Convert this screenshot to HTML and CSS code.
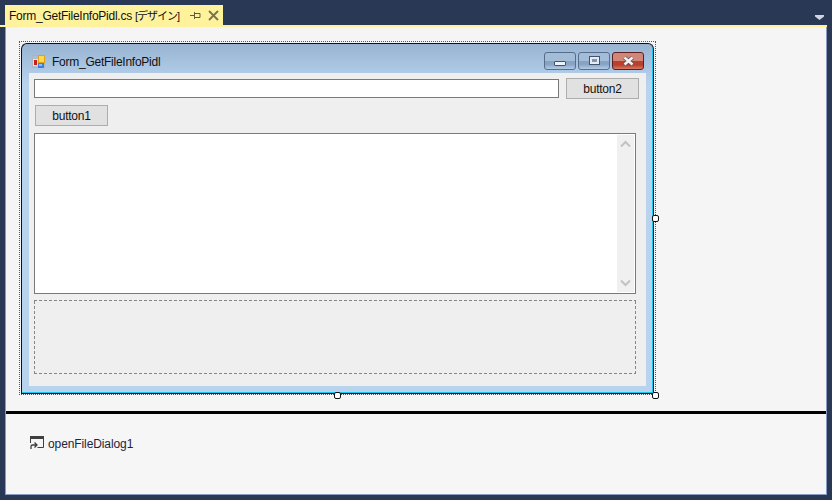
FILE: index.html
```html
<!DOCTYPE html>
<html lang="ja">
<head>
<meta charset="utf-8">
<title>Form_GetFileInfoPidl.cs [デザイン]</title>
<link rel="stylesheet" href="styles.css">
</head>
<body>
<div class="tabbar">
  <div class="tab">
    <span class="tab-title">Form_GetFileInfoPidl.cs <span class="tab-kind">[デザイン]</span></span>
    <svg class="pin" width="11" height="10" viewBox="0 0 11 10"><path d="M0 5.500h4M4.500 2v7M4.500 3.500h5.500v4h-5.500" fill="none" stroke="#5f5a38"/></svg>
    <svg class="tab-close" width="11" height="11" viewBox="0 0 11 11"><path d="M1 1l9 9M10 1l-9 9" fill="none" stroke="#77724f" stroke-width="1.800"/></svg>
  </div>
  <svg class="tab-menu" width="9" height="5" viewBox="0 0 9 5"><path d="M0 0h9v1.500l-4.500 3.500-4.500-3.500z" fill="#cfd6e2"/></svg>
</div>
<div class="tabline"></div>
<main class="surface">
  <section class="canvas">
    <div class="selection">
      <div class="window">
        <div class="titlebar">
          <svg class="app-icon" width="13" height="13" viewBox="0 0 13 13">
            <path d="M.5.500h12v12h-12z" fill="#b4bfca" fill-opacity=".55" stroke="#b0b0b0" stroke-opacity=".7"/>
            <rect x="1" y="4" width="5" height="7" fill="#e8e0d8"/>
            <rect x="2" y="5" width="3" height="5" fill="#c5201f"/>
            <rect x="6" y="0" width="7" height="8" fill="#e0a21c"/>
            <rect x="7" y="1" width="5" height="6" fill="#fbd94e"/>
            <rect x="6" y="8" width="6" height="5" fill="#3f7fdc"/>
            <rect x="7" y="9" width="3" height="2" fill="#8dbcf2"/>
          </svg>
          <span class="win-title">Form_GetFileInfoPidl</span>
          <div class="caption-btns">
            <div class="cap cap-min"><span class="glyph-min"></span></div>
            <div class="cap cap-max"><span class="glyph-max"></span></div>
            <div class="cap cap-close">
              <svg width="15" height="10" viewBox="0 0 15 10"><path d="M3.500 1.500l8 7M11.500 1.500l-8 7" fill="none" stroke="#5a4a4a" stroke-width="4"/><path d="M3.500 1.500l8 7M11.500 1.500l-8 7" fill="none" stroke="#f2f2f2" stroke-width="2.600"/></svg>
            </div>
          </div>
        </div>
        <div class="client">
          <div class="row-top">
            <div class="textbox"></div>
            <div class="btn">button2</div>
          </div>
          <div class="btn btn1">button1</div>
          <div class="listbox">
            <div class="scrollbar">
              <svg width="11" height="8" viewBox="0 0 11 8"><path d="M1 6.500l4.500-4.500 4.500 4.500" fill="none" stroke="#c2c2c2" stroke-width="2"/></svg>
              <svg width="11" height="8" viewBox="0 0 11 8"><path d="M1 1.500l4.500 4.500 4.500-4.500" fill="none" stroke="#c2c2c2" stroke-width="2"/></svg>
            </div>
          </div>
          <div class="panel"></div>
        </div>
      </div>
      <span class="handle h-e"></span>
      <span class="handle h-s"></span>
      <span class="handle h-se"></span>
    </div>
  </section>
  <div class="divider"></div>
  <section class="tray">
    <svg class="tray-icon" width="15" height="14" viewBox="0 0 15 14"><path d="M0 0h14v3h-14z" fill="#3f3f3f"/><path d="M.5 3v4M13.500 3v8.500h-6" fill="none" stroke="#3f3f3f"/><path d="M1 13v-2.500q0-1.500 1.500-1.500h4M4.500 6.500l2.500 2.500-2.500 2.500" fill="none" stroke="#3f3f3f" stroke-width="1.300"/></svg>
    <span class="tray-label">openFileDialog1</span>
  </section>
</main>
</body>
</html>
```
FILE: styles.css
```css
* { box-sizing: border-box; }
html, body { margin: 0; height: 100%; }
body {
  width: 832px;
  height: 500px;
  overflow: hidden;
  background: #293955;
  font-family: "Liberation Sans", "Noto Sans CJK JP", sans-serif;
  font-size: 12px;
  letter-spacing: -.25px;
  color: #111;
  display: flex;
  flex-direction: column;
}
.tabbar {
  height: 25px;
  padding: 5px 8px 0 5px;
  display: flex;
  justify-content: space-between;
  align-items: flex-start;
}
.tab {
  width: 218px;
  height: 20px;
  background: #fff29d;
  padding-left: 4px;
  display: flex;
  align-items: center;
}
.tab-title { width: 181px; flex: none; white-space: nowrap; }
.tab-kind { font-size: 11px; letter-spacing: -1px; }
.pin { margin-right: 7px; flex: none; }
.tab-close { flex: none; }
.tab-menu { margin-top: 10px; }
.tabline { height: 2px; margin-right: 5px; background: #fff29d; }
.surface {
  width: 822px;
  height: 468px;
  margin-left: 5px;
  background: #f5f5f5;
  border-left: 1px solid #8a9bc0;
  border-right: 1px solid #8a9bc0;
  border-bottom: 1px solid #8a9bc0;
  display: flex;
  flex-direction: column;
}
.canvas { height: 384px; padding: 14px 0 0 13px; }
.selection {
  position: relative;
  width: 637px;
  height: 354px;
  padding: 1px 1px 0;
  border: 1px dotted #555;
}
.window {
  width: 633px;
  height: 351px;
  border: 1px solid #111;
  border-right-color: #0a1a28;
  border-radius: 6px 6px 0 0;
  background: linear-gradient(#98b4d2, #b8d3ee 40px);
  box-shadow: inset -1px -1px 0 #19c8f0;
  padding: 0 7px 7px 7px;
  display: flex;
  flex-direction: column;
}
.titlebar {
  height: 29px;
  flex: none;
  display: flex;
  align-items: center;
  padding: 6px 2px 0 3px;
}
.app-icon { margin-right: 7px; flex: none; }
.win-title { flex: 1; }
.caption-btns { display: flex; gap: 2px; margin-top: -1px; }
.cap {
  width: 32px;
  height: 18px;
  border: 1px solid #566d8b;
  border-radius: 3px;
  background: linear-gradient(#a3bcd8 0 50%, #86a3c4 50% 70%, #b3cce6);
  display: flex;
  align-items: center;
  justify-content: center;
}
.cap-close {
  border-color: #5c2020;
  background: linear-gradient(#d2867a 0 50%, #b9402c 50% 75%, #d47c68);
}
.glyph-min {
  width: 12px;
  height: 5px;
  flex: none;
  margin-top: 5px;
  background: #eef1f5;
  border: 1px solid #44546c;
  border-radius: 1px;
}
.glyph-max {
  width: 11px;
  height: 9px;
  flex: none;
  margin-top: -2px;
  background: #7d96b8;
  border: 1px solid #44546c;
  box-shadow: inset 0 0 0 2px #e8ecf2;
}
.client {
  flex: 1;
  background: #efefef;
  padding: 5px 10px 12px 5px;
  display: flex;
  flex-direction: column;
}
.row-top { display: flex; gap: 7px; align-items: center; }
.textbox {
  width: 525px;
  height: 19px;
  flex: none;
  background: #fff;
  border: 1px solid #7a7a7a;
}
.btn {
  width: 73px;
  height: 21px;
  flex: none;
  background: #e1e1e1;
  border: 1px solid #adadad;
  display: flex;
  align-items: center;
  justify-content: center;
}
.btn1 { margin: 6px 0 7px 1px; }
.listbox {
  height: 161px;
  flex: none;
  background: #fff;
  border: 1px solid #7a7a7a;
  padding: 1px;
  display: flex;
  justify-content: flex-end;
}
.scrollbar {
  width: 17px;
  background: #f0f0f0;
  display: flex;
  flex-direction: column;
  justify-content: space-between;
  align-items: center;
  padding: 5px 0;
}
.panel {
  height: 74px;
  flex: none;
  margin-top: 6px;
  background:
    repeating-linear-gradient(90deg, #858585 0 3px, transparent 3px 5px) left top / 100% 1px no-repeat,
    repeating-linear-gradient(90deg, #858585 0 3px, transparent 3px 5px) left bottom / 100% 1px no-repeat,
    repeating-linear-gradient(0deg, #858585 0 3px, transparent 3px 5px) left top / 1px 100% no-repeat,
    repeating-linear-gradient(0deg, #858585 0 3px, transparent 3px 5px) right top / 1px 100% no-repeat;
}
.handle {
  position: absolute;
  width: 7px;
  height: 7px;
  background: #fff;
  border: 1px solid #111;
  border-radius: 2px;
}
.h-e { right: -4px; top: 173px; }
.h-s { left: 314px; bottom: -5px; }
.h-se { right: -4px; bottom: -5px; }
.divider { height: 3px; background: #000; flex: none; }
.tray {
  flex: 1;
  background: #f6f6f6;
  padding: 22px 0 0 24px;
  display: flex;
  align-items: flex-start;
  gap: 3px;
}
.tray-icon { flex: none; }
.tray-label { line-height: 16px; letter-spacing: -.1px; color: #1c2440; }
```
